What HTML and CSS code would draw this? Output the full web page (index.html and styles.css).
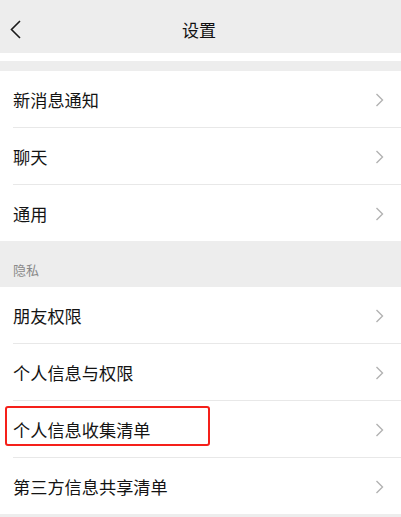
FILE: index.html
```html
<!DOCTYPE html>
<html lang="zh-CN">
<head>
<meta charset="utf-8">
<title>设置</title>
<link rel="stylesheet" href="styles.css">
</head>
<body>
<div class="page">
  <header class="topbar">
    <svg class="back" width="14" height="22" viewBox="0 0 14 22"><path d="M10 2 L1.5 10.5 L10 19" fill="none" stroke="#1a1a1a" stroke-width="1.6"/></svg>
    <div class="title">设置</div>
  </header>
  <div class="white-band"></div>
  <div class="gap"></div>
  <ul class="group">
    <li class="row"><span>新消息通知</span><svg class="chev" width="10" height="14" viewBox="0 0 10 14"><path d="M1.5 1 L7.5 7 L1.5 13" fill="none" stroke="#b2b2b2" stroke-width="1.4"/></svg></li>
    <li class="row"><span>聊天</span><svg class="chev" width="10" height="14" viewBox="0 0 10 14"><path d="M1.5 1 L7.5 7 L1.5 13" fill="none" stroke="#b2b2b2" stroke-width="1.4"/></svg></li>
    <li class="row"><span>通用</span><svg class="chev" width="10" height="14" viewBox="0 0 10 14"><path d="M1.5 1 L7.5 7 L1.5 13" fill="none" stroke="#b2b2b2" stroke-width="1.4"/></svg></li>
  </ul>
  <div class="section-label">隐私</div>
  <ul class="group">
    <li class="row"><span>朋友权限</span><svg class="chev" width="10" height="14" viewBox="0 0 10 14"><path d="M1.5 1 L7.5 7 L1.5 13" fill="none" stroke="#b2b2b2" stroke-width="1.4"/></svg></li>
    <li class="row"><span>个人信息与权限</span><svg class="chev" width="10" height="14" viewBox="0 0 10 14"><path d="M1.5 1 L7.5 7 L1.5 13" fill="none" stroke="#b2b2b2" stroke-width="1.4"/></svg></li>
    <li class="row highlighted"><span>个人信息收集清单</span><svg class="chev" width="10" height="14" viewBox="0 0 10 14"><path d="M1.5 1 L7.5 7 L1.5 13" fill="none" stroke="#b2b2b2" stroke-width="1.4"/></svg><div class="mark"></div></li>
    <li class="row"><span>第三方信息共享清单</span><svg class="chev" width="10" height="14" viewBox="0 0 10 14"><path d="M1.5 1 L7.5 7 L1.5 13" fill="none" stroke="#b2b2b2" stroke-width="1.4"/></svg></li>
  </ul>
</div>
</body>
</html>
```

FILE: styles.css
```css
html, body {
  margin: 0;
  padding: 0;
  background: #ededed;
}
body {
  font-family: "Noto Sans CJK SC", "Noto Sans", sans-serif;
  color: #141414;
}
.page {
  width: 401px;
}
.topbar {
  height: 53px;
  background: #ededed;
  display: flex;
  align-items: center;
  justify-content: center;
  position: relative;
}
.back {
  position: absolute;
  left: 10px;
  top: 19px;
}
.title {
  font-size: 17px;
  line-height: 20px;
  margin-top: 6px;
  margin-left: -3px;
  color: #111;
}
.white-band {
  height: 8px;
  background: #fff;
}
.gap {
  height: 10px;
}
.group {
  list-style: none;
  margin: 0;
  padding: 0;
  background: #fff;
}
.row {
  position: relative;
  height: 56px;
  margin-left: 13px;
  padding-right: 16px;
  display: flex;
  align-items: center;
  justify-content: space-between;
  font-size: 17.2px;
  border-bottom: 1px solid #e8e8e8;
}
.row:last-child {
  border-bottom: none;
}
.row span {
  line-height: 20px;
  margin-top: 1px;
}
.chev {
  margin-top: 1px;
}
.section-label {
  height: 46px;
  box-sizing: border-box;
  padding: 20px 0 0 13px;
  font-size: 13px;
  line-height: 18px;
  color: #8a8a8a;
}
.mark {
  position: absolute;
  left: -8px;
  top: 5px;
  width: 201px;
  height: 36px;
  border: 2px solid #f5201a;
  border-radius: 3px;
}
```
